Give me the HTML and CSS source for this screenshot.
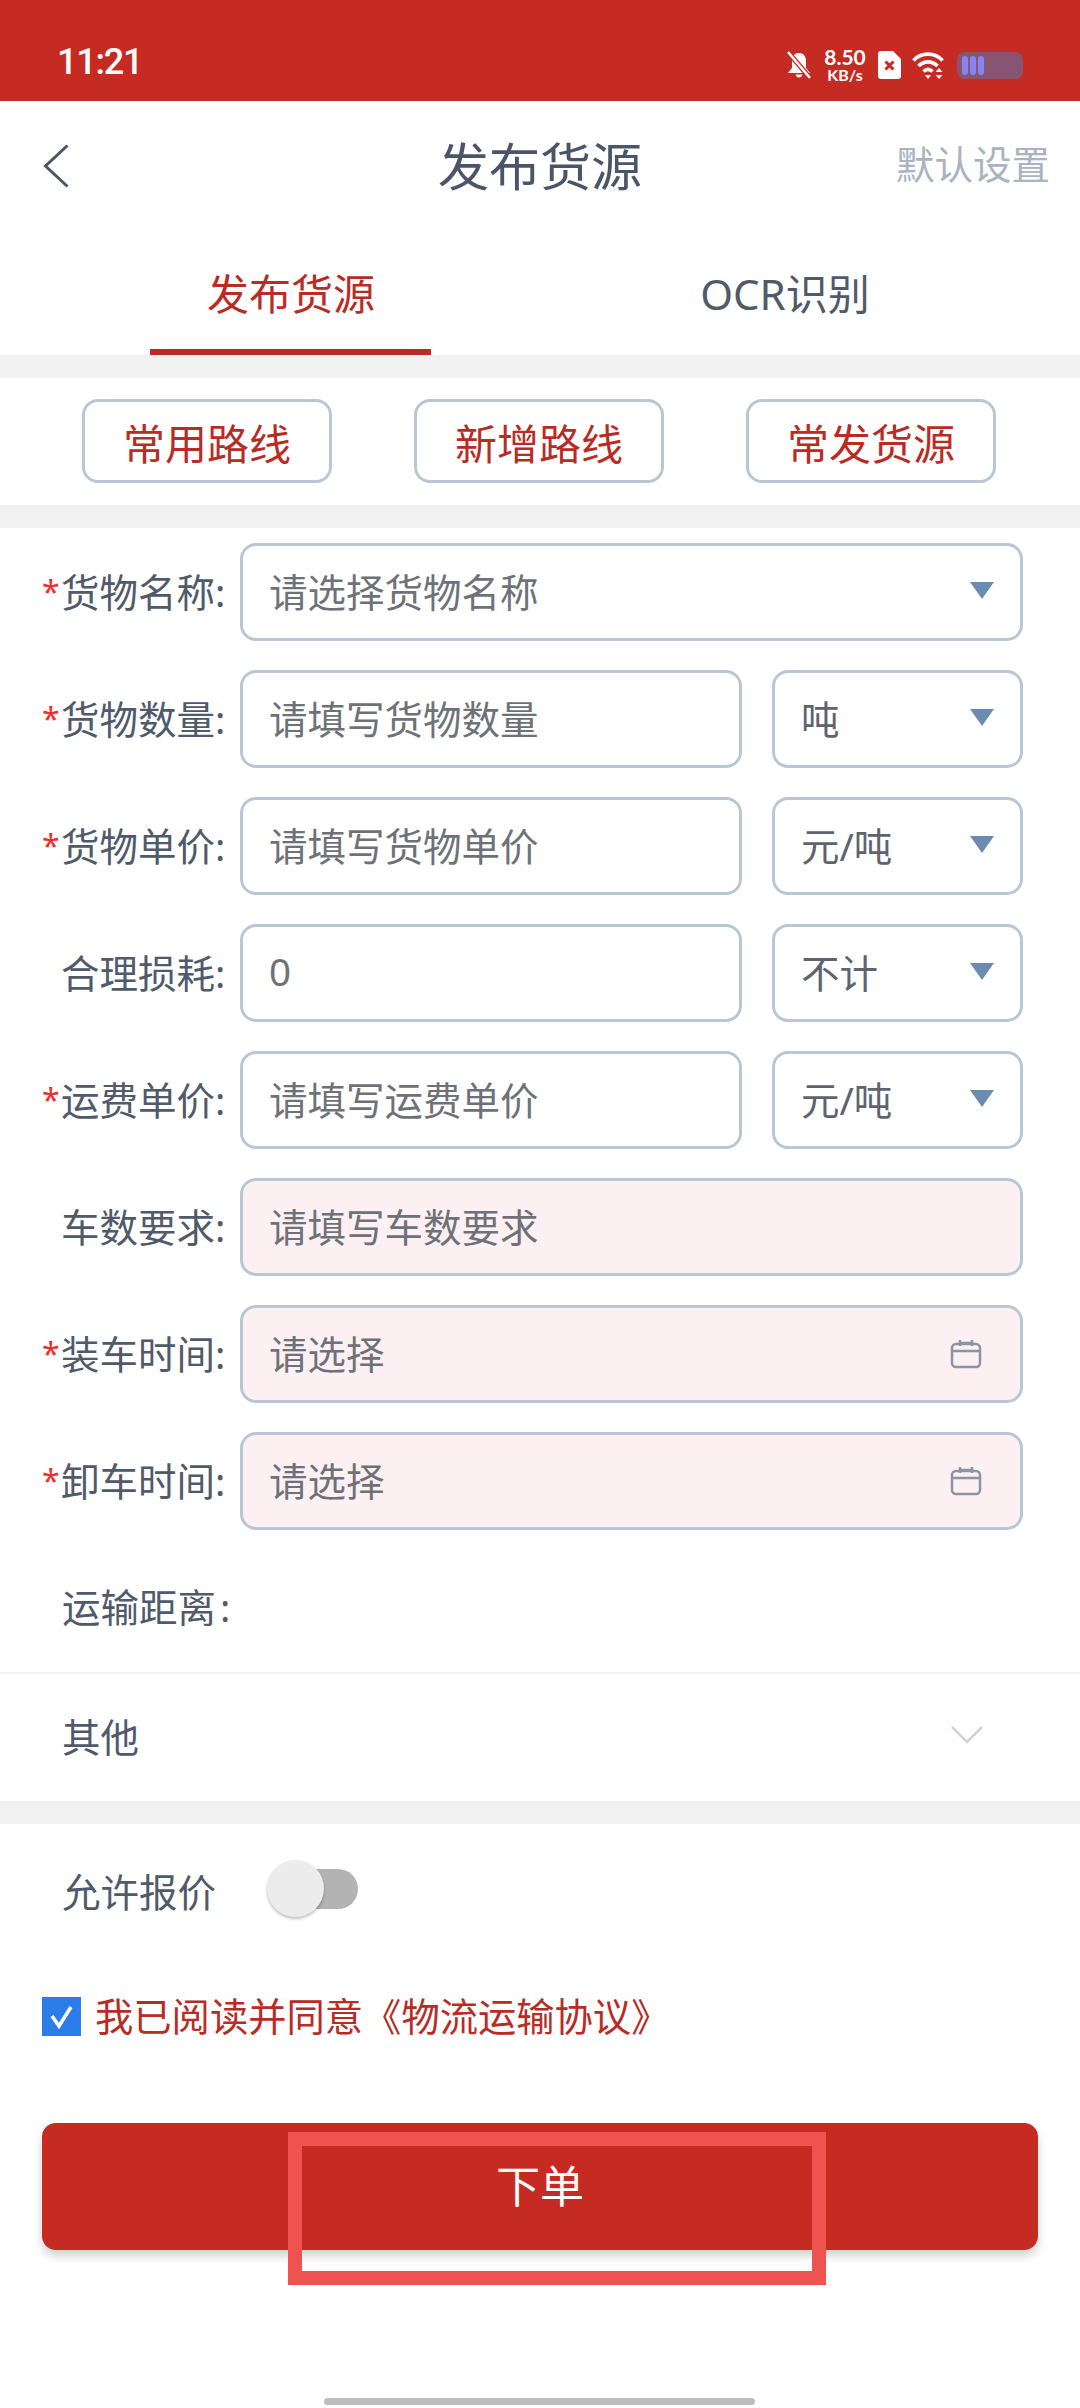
FILE: index.html
```html
<!DOCTYPE html>
<html lang="zh-CN">

<head>
    <meta charset="UTF-8">
    <meta name="viewport" content="width=device-width, initial-scale=1.0">
    <title>发布货源</title>
    <link rel="stylesheet" href="styles.css">
</head>

<body>
    <div id="page">
        <div class="status-bar">
            <span class="time">11:21</span>
            <div class="status-icons">
                <svg class="ic-bell" width="24" height="28" viewBox="0 0 24 28">
                    <path d="M12 2c4.500 0 7 3.500 7 8v7l4 5H1l4-5v-7c0-4.500 2.500-8 7-8z" fill="#fff"/>
                    <path d="M8.500 23.500h7c-.5 2-2 3-3.500 3s-3-1-3.500-3z" fill="#fff"/>
                    <path d="M1 1l22 26" stroke="#c62b23" stroke-width="5"/>
                    <path d="M1 1l22 26" stroke="#fff" stroke-width="2.500"/>
                </svg>
                <div class="speed"><b>8.50</b><b class="unit">KB/s</b></div>
                <svg class="ic-sim" width="23" height="28" viewBox="0 0 23 28">
                    <path d="M3 0h12l8 8v17a3 3 0 0 1-3 3H3a3 3 0 0 1-3-3V3a3 3 0 0 1 3-3z" fill="#fff"/>
                    <path d="M7.500 10.500l8 8M15.500 10.500l-8 8" stroke="#c62b23" stroke-width="3"/>
                </svg>
                <svg class="ic-wifi" width="34" height="28" viewBox="0 0 34 28" fill="none" stroke="#fff" stroke-width="3.600">
                    <path d="M1.500 9.500C9 1 23 1 30.500 9.500"/>
                    <path d="M6.500 15c5.500-5.500 13.500-5.500 19 0"/>
                    <path d="M11.500 20.500c3-2.800 6-2.800 9 0"/>
                    <path d="M13 24h6l-3 4z" fill="#fff" stroke="none"/>
                    <path d="M27 17l3.500 4h-7zM27 28l3.500-4h-7z" fill="#fff" stroke="none"/>
                </svg>
                <div class="battery">
                    <i class="cell"></i><i class="cell"></i><i class="cell"></i>
                </div>
            </div>
        </div>

        <div class="nav">
            <svg class="back" width="26" height="44" viewBox="0 0 26 44" fill="none">
                <path d="M24.500 1.500L2.500 22l22 20.500" stroke="#4a5568" stroke-width="3"/>
            </svg>
            <h1 class="nav-title">发布货源</h1>
            <span class="nav-action">默认设置</span>
        </div>

        <div class="tabs">
            <div class="tab active">发布货源</div>
            <div class="tab">OCR识别</div>
        </div>

        <div class="divider"></div>

        <div class="routes">
            <button class="route-btn">常用路线</button>
            <button class="route-btn">新增路线</button>
            <button class="route-btn">常发货源</button>
        </div>

        <div class="divider"></div>

        <div class="form">
            <div class="row">
                <label class="label req">货物名称:</label>
                <div class="field grow"><span class="ph">请选择货物名称</span><i class="arrow"></i></div>
            </div>
            <div class="row">
                <label class="label req">货物数量:</label>
                <div class="field grow"><span class="ph">请填写货物数量</span></div>
                <div class="field unit-select"><span>吨</span><i class="arrow"></i></div>
            </div>
            <div class="row">
                <label class="label req">货物单价:</label>
                <div class="field grow"><span class="ph">请填写货物单价</span></div>
                <div class="field unit-select"><span>元/吨</span><i class="arrow"></i></div>
            </div>
            <div class="row">
                <label class="label">合理损耗:</label>
                <div class="field grow"><span class="ph">0</span></div>
                <div class="field unit-select"><span>不计</span><i class="arrow"></i></div>
            </div>
            <div class="row">
                <label class="label req">运费单价:</label>
                <div class="field grow"><span class="ph">请填写运费单价</span></div>
                <div class="field unit-select"><span>元/吨</span><i class="arrow"></i></div>
            </div>
            <div class="row">
                <label class="label">车数要求:</label>
                <div class="field grow pink"><span class="ph">请填写车数要求</span></div>
            </div>
            <div class="row">
                <label class="label req">装车时间:</label>
                <div class="field grow pink">
                    <span class="ph">请选择</span>
                    <svg class="cal" width="32" height="30" viewBox="0 0 32 30" fill="none" stroke="#8a94a6" stroke-width="2.500">
                        <rect x="2" y="5" width="28" height="23" rx="4"/>
                        <path d="M2 12h28M10 1v6M22 1v6M10 4h12"/>
                    </svg>
                </div>
            </div>
            <div class="row">
                <label class="label req">卸车时间:</label>
                <div class="field grow pink">
                    <span class="ph">请选择</span>
                    <svg class="cal" width="32" height="30" viewBox="0 0 32 30" fill="none" stroke="#8a94a6" stroke-width="2.500">
                        <rect x="2" y="5" width="28" height="23" rx="4"/>
                        <path d="M2 12h28M10 1v6M22 1v6M10 4h12"/>
                    </svg>
                </div>
            </div>
        </div>

        <div class="distance">运输距离 :</div>

        <div class="other">
            <span>其他</span>
            <svg width="32" height="18" viewBox="0 0 32 18" fill="none">
                <path d="M1 1l15 15L31 1" stroke="#d2d2d2" stroke-width="2.500"/>
            </svg>
        </div>

        <div class="divider"></div>

        <div class="allow">
            <span class="allow-text">允许报价</span>
            <div class="toggle"><i class="track"></i><i class="thumb"></i></div>
        </div>

        <div class="agree">
            <span class="checkbox">
                <svg width="39" height="39" viewBox="0 0 39 39" fill="none">
                    <path d="M10 19l7 10L29 10" stroke="#fff" stroke-width="3.500"/>
                </svg>
            </span>
            <span class="agree-text">我已阅读并同意《物流运输协议》</span>
        </div>

        <button class="submit">下单</button>

        <div class="home-bar"></div>

        <!-- red highlight box drawn over the button -->
        <div class="highlight"></div>
    </div>
</body>

</html>
```

FILE: styles.css
```css
* {
    box-sizing: border-box;
}

body {
    margin: 0;
    background: #fff;
    font-family: "Noto Sans", "Noto Sans CJK SC", sans-serif;
    color: #4f5a6b;
}

#page {
    position: relative;
    width: 1080px;
    height: 2408px;
    overflow: hidden;
}

/* status bar */
.status-bar {
    height: 101px;
    background: #c62b23;
    color: #fff;
    display: flex;
    align-items: flex-end;
    justify-content: space-between;
    padding: 0 57px 19px 57px;
}

.time {
    font-family: Roboto, sans-serif;
    font-size: 36px;
    font-weight: 500;
    line-height: 40px;
    letter-spacing: -1.200px;
}

.status-icons {
    display: flex;
    align-items: center;
    height: 34px;
}

.ic-bell {
    margin-right: 12px;
}

.speed {
    width: 44px;
    display: flex;
    flex-direction: column;
    align-items: center;
    font-family: Lato, sans-serif;
    font-size: 21px;
    line-height: 18px;
    margin-right: 11px;
}

.speed .unit {
    font-size: 16px;
    line-height: 17px;
}

.ic-sim {
    margin-right: 11px;
}

.ic-wifi {
    margin-right: 11px;
}

.battery {
    width: 66px;
    height: 27px;
    border-radius: 8px;
    background: #875571;
    display: flex;
    align-items: center;
    gap: 2px;
    padding-left: 5px;
}

.cell {
    width: 6px;
    height: 19px;
    border-radius: 3px;
    background: #8584f2;
}

/* nav */
.nav {
    height: 132px;
    position: relative;
    display: flex;
    align-items: center;
    justify-content: center;
    padding-bottom: 6px;
}

.back {
    position: absolute;
    left: 43px;
    top: 43px;
}

.nav-title {
    margin: 0;
    font-size: 51px;
    font-weight: 400;
    color: #4a5568;
}

.nav-action {
    position: absolute;
    right: 30px;
    top: 39px;
    font-size: 38.500px;
    line-height: 48px;
    color: #a9b3c1;
}

/* tabs */
.tabs {
    height: 122px;
    display: flex;
    padding: 0 48px 0 44px;
}

.tab {
    flex: 1;
    position: relative;
    display: flex;
    align-items: center;
    justify-content: center;
    font-size: 42px;
    color: #4f5a6b;
    padding-bottom: 6px;
}

.tab.active {
    color: #b92c26;
}

.tab.active::after {
    content: "";
    position: absolute;
    bottom: 0;
    left: 106px;
    width: 281px;
    height: 6px;
    background: #b92c26;
}

.divider {
    height: 23px;
    background: #f1f1f1;
}

/* route buttons */
.routes {
    height: 127px;
    display: flex;
    gap: 82px;
    padding: 21px 0 0 82px;
}

.route-btn {
    width: 250px;
    height: 84px;
    background: #fff;
    border: 3px solid #b9c7d4;
    border-radius: 16px;
    padding: 0;
    font-family: inherit;
    font-size: 42px;
    color: #b92c26;
}

/* form rows */
.form {
    padding: 15px 57px 0 0;
    display: flex;
    flex-direction: column;
    gap: 29px;
}

.row {
    display: flex;
    align-items: center;
    gap: 30px;
    height: 98px;
}

.label {
    width: 240px;
    margin-right: -30px;
    padding: 0 0 4px 42px;
    font-size: 38.500px;
    white-space: nowrap;
    color: #4f5a6b;
}

.label::before {
    content: "";
    display: inline-block;
    width: 19px;
    color: #f02d2d;
    font-size: 32px;
    vertical-align: 3px;
}

.label.req::before {
    content: "*";
}

.field {
    height: 98px;
    border: 3px solid #b9c7d4;
    border-radius: 16px;
    display: flex;
    align-items: center;
    justify-content: space-between;
    font-size: 38.500px;
    padding: 0 25px 4px 26px;
    color: #5d6470;
}

.field.grow {
    flex: 1;
}

.unit-select {
    width: 251px;
}

.pink {
    background: #fdf0f3;
}

.ph {
    color: #6e7278;
}

.arrow {
    width: 0;
    height: 0;
    border-left: 12px solid transparent;
    border-right: 12px solid transparent;
    border-top: 17px solid #6b8cae;
    margin-right: 1px;
}

.cal {
    margin: 4px 13px 0 0;
}

/* distance + other */
.distance {
    height: 144px;
    padding: 8px 0 0 62px;
    display: flex;
    align-items: center;
    font-size: 38.500px;
    word-spacing: -6px;
    border-bottom: 2px solid #f1f1f1;
}

.other {
    height: 127px;
    display: flex;
    align-items: center;
    justify-content: space-between;
    padding: 0 97px 6px 62px;
    font-size: 38.500px;
}

/* toggle row */
.allow {
    height: 136px;
    display: flex;
    align-items: center;
    padding-left: 62px;
    font-size: 38.500px;
}

.allow-text {
    padding-bottom: 4px;
}

.toggle {
    position: relative;
    width: 91px;
    height: 58px;
    margin-left: 51px;
    margin-bottom: 6px;
}

.track {
    position: absolute;
    left: 24px;
    top: 9px;
    right: 0;
    height: 40px;
    border-radius: 20px;
    background: #b3b3b3;
}

.thumb {
    position: absolute;
    left: 0;
    top: 0;
    width: 57px;
    height: 57px;
    border-radius: 50%;
    background: #ececec;
    box-shadow: 0 2px 3px rgba(0, 0, 0, 0.25);
}

/* agreement */
.agree {
    display: flex;
    align-items: center;
    gap: 14px;
    height: 39px;
    margin-top: 37px;
    padding-left: 42px;
}

.checkbox {
    width: 39px;
    height: 39px;
    background: #2b7de9;
    display: block;
}

.checkbox svg {
    display: block;
}

.agree-text {
    font-size: 38.300px;
    color: #b92c26;
    padding-bottom: 4px;
}

/* submit */
.submit {
    display: block;
    width: 996px;
    height: 127px;
    margin: 87px 0 0 42px;
    background: #c62b23;
    border: none;
    border-radius: 14px;
    box-shadow: 0 6px 10px rgba(0, 0, 0, 0.18);
    font-family: inherit;
    font-size: 44px;
    color: #fff;
    padding: 0 0 6px;
}

.home-bar {
    width: 431px;
    height: 7px;
    margin: 148px 0 0 324px;
    border-radius: 4px;
    background: #bdbdbd;
}

.highlight {
    position: absolute;
    left: 288px;
    top: 2132px;
    width: 538px;
    height: 153px;
    border: 14px solid #ef5350;
}
```
